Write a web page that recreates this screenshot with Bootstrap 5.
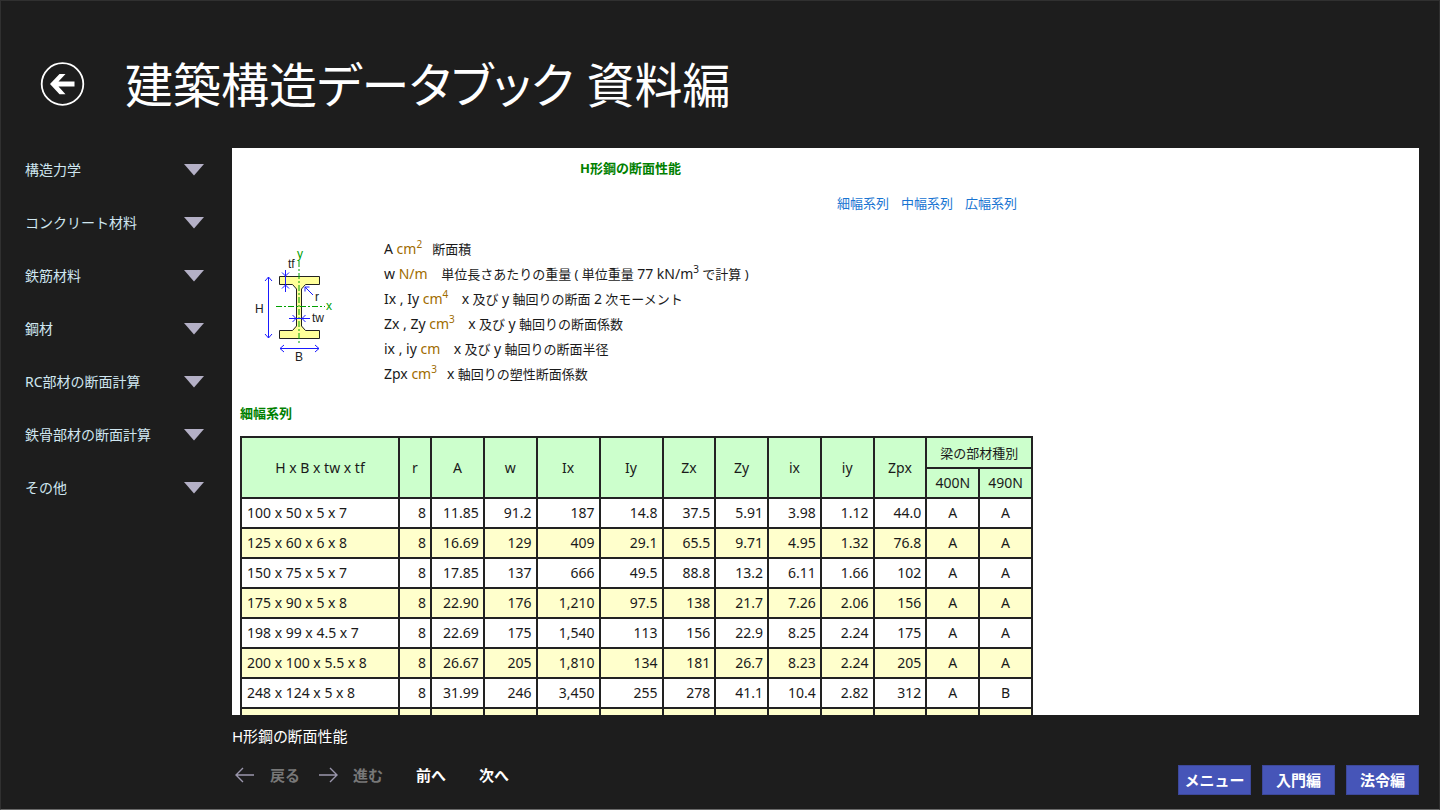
<!DOCTYPE html>
<html lang="ja">
<head>
<meta charset="utf-8">
<meta name="viewport" content="width=device-width, initial-scale=1">
<title>建築構造データブック 資料編</title>
<link rel="stylesheet" href="https://cdn.jsdelivr.net/npm/bootstrap@5.3.0/dist/css/bootstrap.min.css">
<style>
  :root { --ground: #1d1d1d; --ink: #1a1a1a; }
  body { background: var(--ground); color: #fff; font-family: "Noto Sans", "Noto Sans CJK JP", sans-serif; font-size: 15px; font-feature-settings: "palt"; }
  .shell { border: solid #303030; border-width: 1px; border-bottom-color: #6a6a6a; }
  .masthead { height: 142px; padding: 56px 0 0 39px; gap: 40px; }
  .masthead h1 { font-size: 48px; font-weight: 400; line-height: 56px; }
  .round-back { margin-top: 4px; }
  .round-back svg { width: 45px; height: 45px; }
  .side { width: 231px; }
  .side-item { height: 53px; padding: 0 28px 0 24px; color: #cfe6f0; font-size: 14px; line-height: 20px; }
  .frame { background: #fff; color: var(--ink); margin: 5px 20px 0 0; font-size: 13px; scrollbar-width: none; }
  .frame::-webkit-scrollbar { display: none; }
  .sheet { padding: 10px 8px 0; font-feature-settings: normal; }
  .sheet-head { max-width: 781px; }
  .sheet h2, .sheet h3 { color: #008000; font-size: 13px; font-weight: 700; line-height: 20px; }
  .series { gap: 12px; margin-top: 15px; padding-right: 4px; line-height: 20px; }
  .series a { color: #1874d2; text-decoration: none; }
  .legend-box { margin: 24px 0 16px; }
  .legend-box svg { width: 84px; height: 117px; margin: 11px 50px 0 10px; }
  .defs p { line-height: 25px; white-space: pre; }
  .defs span { font-size: 14px; line-height: 14px; }
  .unit { color: #a06c00; }
  .defs sup { font-size: 10px; top: -6px; line-height: 0; }
  .steel { width: 793px; table-layout: fixed; border-collapse: collapse; font-size: 14px; line-height: 20px; margin-top: 13px; }
  .steel th, .steel td { border: 2px solid #222; padding: 0 4px; height: 30px; font-weight: 400; text-align: right; }
  .steel thead th { background: #cfc; text-align: center; }
  .steel thead tr:first-child th { height: 31px; }
  .steel thead .group { font-size: 13px; }
  .steel tbody th { text-align: left; padding-left: 5px; }
  .steel tbody td:nth-last-child(-n+2) { text-align: center; }
  .steel tbody tr:nth-child(even) > * { background: #ffc; }
  .c-name { width: 158px; } .c-r { width: 32px; } .c-i { width: 63px; }
  .foot { height: 94px; padding: 10px 20px 0 231px; }
  .foot-title { line-height: 22px; }
  .pager { gap: 15px; margin-top: 17px; }
  .pager button { font-size: 15px; font-weight: 700; line-height: 22px; color: #fff; }
  .pager button:disabled { color: #777; opacity: 1; }
  .pager .arrow { gap: 14px; }
  .pager .plain { margin-left: 18px; }
  .modes { gap: 11px; padding-top: 40px; }
  .modes .btn { width: 73px; height: 30px; padding: 0; background: #4655b8; border: 1px solid #3d489a; border-radius: 0; color: #fff; font-size: 15px; font-weight: 700; line-height: 20px; }
</style>
</head>
<body>
<div class="shell d-flex flex-column vh-100">
  <header class="masthead d-flex align-items-start flex-shrink-0">
    <button type="button" class="round-back btn p-0 border-0 lh-1" aria-label="戻る">
      <svg viewBox="0 0 45 45"><circle cx="22.500" cy="23" r="20.8" fill="none" stroke="#fff" stroke-width="1.800"/><path d="M10 23 19.500 13H25.500L18.500 20.600H34.500V25.600H18.500L25.500 33.200H19.500Z" fill="#fff"/></svg>
    </button>
    <h1 class="mb-0">建築構造データブック 資料編</h1>
  </header>

  <div class="d-flex flex-grow-1 overflow-hidden">
    <nav class="side flex-shrink-0" id="side"></nav>
    <main class="frame flex-grow-1 overflow-auto">
      <div class="sheet">
        <div class="sheet-head">
          <h2 class="text-center mb-0">H形鋼の断面性能</h2>
          <div class="series d-flex justify-content-end"><a href="#narrow">細幅系列</a><a href="#middle">中幅系列</a><a href="#wide">広幅系列</a></div>
        </div>
        <div class="legend-box d-flex align-items-start">
          <svg viewBox="250 248 84 117" font-family="Liberation Sans, sans-serif" font-size="12" fill="#222">
            <path d="M279.500 276.500H319.500V284.500H305.500L301.500 289V326L305.500 330.500H319.500V338.500H279.500V330.500H292.500L296.500 326V289L292.500 284.500H279.500Z" fill="#ffff99" stroke="#222"/>
            <path d="M276 306.500H325M299 261V345" fill="none" stroke="#00a000" stroke-dasharray="6 2 2 2"/>
            <g fill="none" stroke="#1a1aff">
              <path d="M268.500 277V338M265 281 268.500 277 272 281M265 334 268.500 338 272 334"/>
              <path d="M280 348.500H319M284 345 280 348.500 284 352M315 345 319 348.500 315 352"/>
              <path d="M285.500 270V292M282 272.500 285.500 276 289 272.500M282 288.500 285.500 285 289 288.500"/>
              <path d="M313 295 305 287M309.500 287H305V291.500"/>
              <path d="M289 318.500H310M292.500 315 296 318.500 292.500 322M305.500 315 302 318.500 305.500 322"/>
            </g>
            <text x="288" y="268">tf</text><text x="315" y="301">r</text><text x="312" y="322">tw</text>
            <text x="255" y="313">H</text><text x="295" y="361">B</text>
            <g fill="#00a000"><text x="297" y="258">y</text><text x="326" y="310">x</text></g>
          </svg>
          <div class="defs">
            <p class="mb-0"><span>A <span class="unit">cm<sup>2</sup></span></span>   断面積</p>
            <p class="mb-0"><span>w <span class="unit">N/m</span></span>    単位長さあたりの重量 ( 単位重量 <span>77 kN/m</span><sup>3</sup> で計算 )</p>
            <p class="mb-0"><span>Ix , Iy <span class="unit">cm<sup>4</sup></span></span>    <span>x</span> 及び <span>y</span> 軸回りの断面 <span>2</span> 次モーメント</p>
            <p class="mb-0"><span>Zx , Zy <span class="unit">cm<sup>3</sup></span></span>    <span>x</span> 及び <span>y</span> 軸回りの断面係数</p>
            <p class="mb-0"><span>ix , iy <span class="unit">cm</span></span>    <span>x</span> 及び <span>y</span> 軸回りの断面半径</p>
            <p class="mb-0"><span>Zpx <span class="unit">cm<sup>3</sup></span></span>   <span>x</span> 軸回りの塑性断面係数</p>
          </div>
        </div>
        <h3 class="mb-0" id="narrow">細幅系列</h3>
        <table class="steel">
          <colgroup><col class="c-name"><col class="c-r"><col span="2"><col class="c-i" span="2"><col span="7"></colgroup>
          <thead>
            <tr><th rowspan="2">H x B x tw x tf</th><th rowspan="2">r</th><th rowspan="2">A</th><th rowspan="2">w</th><th rowspan="2">Ix</th><th rowspan="2">Iy</th><th rowspan="2">Zx</th><th rowspan="2">Zy</th><th rowspan="2">ix</th><th rowspan="2">iy</th><th rowspan="2">Zpx</th><th colspan="2" class="group">梁の部材種別</th></tr>
            <tr><th>400N</th><th>490N</th></tr>
          </thead>
          <tbody id="rows"></tbody>
        </table>
      </div>
    </main>
  </div>

  <footer class="foot d-flex justify-content-between flex-shrink-0">
    <div>
      <div class="foot-title">H形鋼の断面性能</div>
      <div class="pager d-flex align-items-center">
        <button type="button" class="arrow btn border-0 p-0 d-flex align-items-center" disabled>
          <svg width="24" height="20" viewBox="0 0 24 20" fill="none" stroke="#9a96ac" stroke-width="1.400"><path d="M22 10H4M11 3 4 10 11 17"/></svg>戻る</button>
        <button type="button" class="arrow btn border-0 p-0 d-flex align-items-center" disabled>
          <svg width="24" height="20" viewBox="0 0 24 20" fill="none" stroke="#9a96ac" stroke-width="1.400"><path d="M4 10H22M15 3 22 10 15 17"/></svg>進む</button>
        <button type="button" class="plain btn border-0 p-0">前へ</button>
        <button type="button" class="plain btn border-0 p-0">次へ</button>
      </div>
    </div>
    <div class="modes d-flex">
      <button type="button" class="btn">メニュー</button>
      <button type="button" class="btn">入門編</button>
      <button type="button" class="btn">法令編</button>
    </div>
  </footer>
</div>
<script src="https://cdn.jsdelivr.net/npm/bootstrap@5.3.0/dist/js/bootstrap.bundle.min.js"></script>
<script>
  const topics = ["構造力学", "コンクリート材料", "鉄筋材料", "鋼材", "RC部材の断面計算", "鉄骨部材の断面計算", "その他"];
  document.getElementById("side").innerHTML = topics.map(t =>
    `<button type="button" class="side-item btn border-0 rounded-0 w-100 d-flex align-items-center justify-content-between text-start"><span>${t}</span><svg width="20" height="12" viewBox="0 0 20 12"><path d="M0 0H20L10 11.500Z" fill="#b4b0c6"/></svg></button>`).join("");

  const data = [
    "100 x 50 x 5 x 7|8|11.85|91.2|187|14.8|37.5|5.91|3.98|1.12|44.0|A|A",
    "125 x 60 x 6 x 8|8|16.69|129|409|29.1|65.5|9.71|4.95|1.32|76.8|A|A",
    "150 x 75 x 5 x 7|8|17.85|137|666|49.5|88.8|13.2|6.11|1.66|102|A|A",
    "175 x 90 x 5 x 8|8|22.90|176|1,210|97.5|138|21.7|7.26|2.06|156|A|A",
    "198 x 99 x 4.5 x 7|8|22.69|175|1,540|113|156|22.9|8.25|2.24|175|A|A",
    "200 x 100 x 5.5 x 8|8|26.67|205|1,810|134|181|26.7|8.23|2.24|205|A|A",
    "248 x 124 x 5 x 8|8|31.99|246|3,450|255|278|41.1|10.4|2.82|312|A|B",
    "||||||||||||"
  ];
  document.getElementById("rows").innerHTML = data.map(r => {
    const [name, ...rest] = r.split("|");
    return `<tr><th scope="row">${name}</th>${rest.map(v => `<td>${v}</td>`).join("")}</tr>`;
  }).join("");
</script>
</body>
</html>
